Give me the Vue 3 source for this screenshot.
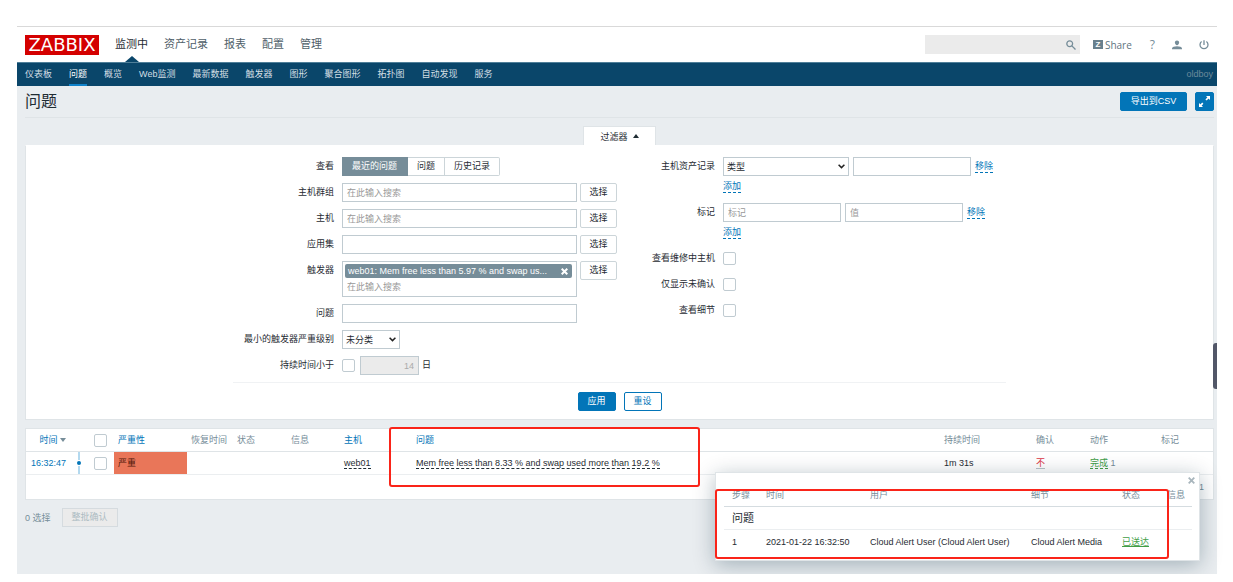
<script setup>
import { ref } from 'vue'

const mainMenu = ['监测中', '资产记录', '报表', '配置', '管理']
const subMenu = ['仪表板', '问题', '概览', 'Web监测', '最新数据', '触发器', '图形', '聚合图形', '拓扑图', '自动发现', '服务']
const views = ['最近的问题', '问题', '历史记录']
const view = ref('最近的问题')
const flags = ['查看维修中主机', '仅显示未确认', '查看细节']
</script>

<template>
  <div class="page">
    <header class="top">
      <a class="logo" href="#">ZABBIX</a>
      <nav class="main-nav">
        <a v-for="(m, i) in mainMenu" :key="m" href="#" :class="{ active: i === 0 }">{{ m }}</a>
      </nav>
      <div class="tools">
        <form class="search" @submit.prevent>
          <input type="text" aria-label="搜索" />
          <button type="submit" aria-label="搜索">
            <svg width="10" height="10" viewBox="0 0 10 10" fill="none" stroke="#768d99" stroke-width="1.300">
              <circle cx="3.700" cy="3.700" r="2.900" /><path d="M5.900 5.900 9.500 9.500" />
            </svg>
          </button>
        </form>
        <a class="share" href="#"><span class="z">Z</span>Share</a>
        <a class="help" href="#">?</a>
        <a class="icon" href="#" aria-label="用户">
          <svg width="10" height="10" viewBox="0 0 10 10" fill="#768d99">
            <path d="M5 0.4c1.3 0 2.1.9 2.1 2.2S6.200 5.200 5 5.200 2.900 3.900 2.900 2.600 3.700.4 5 .4z" />
            <path d="M0 9.300V8.200C0 6.900 2.600 6.200 5 6.200s5 .7 5 2v1.100z" />
          </svg>
        </a>
        <a class="icon" href="#" aria-label="退出">
          <svg width="10" height="10" viewBox="0 0 10 10" fill="none" stroke="#768d99" stroke-width="1.300">
            <path d="M5 .3v4.600M2.600 1.500A4 4 0 1 0 7.400 1.500" />
          </svg>
        </a>
      </div>
    </header>

    <nav class="sub-nav">
      <a v-for="(m, i) in subMenu" :key="m" href="#" :class="{ active: i === 1 }">{{ m }}</a>
      <span class="user">oldboy</span>
    </nav>

    <main>
      <div class="title-bar">
        <h1>问题</h1>
        <button class="btn primary csv" type="button">导出到CSV</button>
        <button class="btn primary full" type="button" aria-label="全屏">
          <svg width="13" height="13" viewBox="0 0 13 13" fill="#fff" stroke="#fff">
            <path d="M8 1h4v4z" stroke="none" /><path d="M1 8v4h4z" stroke="none" />
            <path d="M10.800 2.200 8 5M2.200 10.800 4.800 8.200" stroke-width="1.700" />
          </svg>
        </button>
      </div>

      <div class="tab-row">
        <button class="tab" type="button">过滤器
          <svg width="6" height="4" viewBox="0 0 6 4"><path d="M0 4 3 0l3 4z" fill="#1f2c33" /></svg>
        </button>
      </div>

      <form class="filter" @submit.prevent>
        <div class="cols">
          <div class="col">
            <div class="row">
              <span class="label">查看</span>
              <div class="seg">
                <label v-for="v in views" :key="v" :class="{ on: view === v }">
                  <input v-model="view" type="radio" name="view" :value="v" />{{ v }}
                </label>
              </div>
            </div>
            <div class="row">
              <label class="label" for="groups">主机群组</label>
              <input id="groups" class="field wide" type="text" placeholder="在此输入搜索" />
              <button class="btn pick" type="button">选择</button>
            </div>
            <div class="row">
              <label class="label" for="hosts">主机</label>
              <input id="hosts" class="field wide" type="text" placeholder="在此输入搜索" />
              <button class="btn pick" type="button">选择</button>
            </div>
            <div class="row">
              <label class="label" for="app">应用集</label>
              <input id="app" class="field wide" type="text" />
              <button class="btn pick" type="button">选择</button>
            </div>
            <div class="row">
              <label class="label" for="triggers">触发器</label>
              <div class="multi">
                <div class="chip">
                  <span>web01: Mem free less than 5.97 % and swap us...</span>
                  <button type="button" aria-label="移除">
                    <svg width="7" height="7" viewBox="0 0 7 7" stroke="#fff" stroke-width="2"><path d="m.7.7 5.600 5.600M6.300.7.7 6.300" /></svg>
                  </button>
                </div>
                <input id="triggers" type="text" placeholder="在此输入搜索" />
              </div>
              <button class="btn pick" type="button">选择</button>
            </div>
            <div class="row">
              <label class="label" for="problem">问题</label>
              <input id="problem" class="field wide" type="text" />
            </div>
            <div class="row">
              <label class="label" for="severity">最小的触发器严重级别</label>
              <span class="select short">
                <select id="severity"><option>未分类</option></select>
                <svg width="7" height="5" viewBox="0 0 7 5" fill="none" stroke="#222" stroke-width="1.500"><path d="m.6.7 2.900 2.900L6.400.7" /></svg>
              </span>
            </div>
            <div class="row">
              <label class="label" for="age">持续时间小于</label>
              <input id="age" class="check" type="checkbox" />
              <input class="field days" type="text" value="14" disabled aria-label="天数" />
              <span class="unit">日</span>
            </div>
          </div>

          <div class="col right">
            <div class="row">
              <label class="label" for="inv">主机资产记录</label>
              <div class="stack">
                <div class="line">
                  <span class="select long">
                    <select id="inv"><option>类型</option></select>
                    <svg width="7" height="5" viewBox="0 0 7 5" fill="none" stroke="#222" stroke-width="1.500"><path d="m.6.7 2.900 2.900L6.400.7" /></svg>
                  </span>
                  <input class="field half" type="text" aria-label="资产值" />
                  <a class="link" href="#">移除</a>
                </div>
                <div class="add"><a class="link" href="#">添加</a></div>
              </div>
            </div>
            <div class="row">
              <label class="label" for="tag">标记</label>
              <div class="stack">
                <div class="line">
                  <input id="tag" class="field half" type="text" placeholder="标记" />
                  <input class="field half" type="text" placeholder="值" aria-label="值" />
                  <a class="link" href="#">移除</a>
                </div>
                <div class="add"><a class="link" href="#">添加</a></div>
              </div>
            </div>
            <div v-for="(f, i) in flags" :key="f" class="row">
              <label class="label" :for="'flag' + i">{{ f }}</label>
              <input :id="'flag' + i" class="check" type="checkbox" />
            </div>
          </div>
        </div>
        <div class="actions">
          <button class="btn primary" type="submit">应用</button>
          <button class="btn outline" type="reset">重设</button>
        </div>
      </form>

      <section class="list">
        <table class="problems">
          <colgroup>
            <col class="c-time" /><col class="c-line" /><col class="c-check" /><col class="c-sev" /><col class="c-rec" />
            <col class="c-stat" /><col class="c-info" /><col class="c-host" /><col /><col class="c-dur" />
            <col class="c-ack" /><col class="c-act" /><col class="c-tag" />
          </colgroup>
          <thead>
            <tr>
              <th class="num"><a href="#">时间 <svg width="6" height="4" viewBox="0 0 6 4"><path d="M0 0h6L3 4z" fill="#768d99" /></svg></a></th>
              <th></th>
              <th class="tick"><input class="check" type="checkbox" aria-label="全选" /></th>
              <th><a href="#">严重性</a></th>
              <th>恢复时间</th>
              <th>状态</th>
              <th>信息</th>
              <th><a href="#">主机</a></th>
              <th><a href="#">问题</a></th>
              <th>持续时间</th>
              <th>确认</th>
              <th>动作</th>
              <th>标记</th>
            </tr>
          </thead>
          <tbody>
            <tr>
              <td class="num"><a href="#">16:32:47</a></td>
              <td class="timeline"><i></i></td>
              <td class="tick"><input class="check" type="checkbox" aria-label="选择问题" /></td>
              <td class="sev">严重</td>
              <td></td>
              <td></td>
              <td></td>
              <td><a class="dark" href="#">web01</a></td>
              <td><a class="dark" href="#">Mem free less than 8.33 % and swap used more than 19.2 %</a></td>
              <td>1m 31s</td>
              <td><a class="no" href="#">不</a></td>
              <td class="grey"><a class="ok" href="#">完成</a> 1</td>
              <td></td>
            </tr>
          </tbody>
        </table>
        <div class="total">1</div>

        <div class="popup">
          <button class="close" type="button" aria-label="关闭">
            <svg width="7" height="7" viewBox="0 0 7 7" stroke="#a9b6bd" stroke-width="1.800"><path d="m.7.7 5.600 5.600M6.300.7.7 6.300" /></svg>
          </button>
          <table>
            <colgroup>
              <col class="p-step" /><col class="p-time" /><col class="p-user" /><col class="p-detail" /><col class="p-stat" /><col />
            </colgroup>
            <thead>
              <tr><th>步骤</th><th>时间</th><th>用户</th><th>细节</th><th>状态</th><th>信息</th></tr>
            </thead>
            <tbody>
              <tr><td class="group" colspan="6">问题</td></tr>
              <tr class="last">
                <td>1</td><td>2021-01-22 16:32:50</td><td>Cloud Alert User (Cloud Alert User)</td>
                <td>Cloud Alert Media</td><td class="sent">已送达</td><td></td>
              </tr>
            </tbody>
          </table>
          <div class="mark mark-popup"></div>
        </div>
        <div class="mark mark-problem"></div>
      </section>

      <div class="bulk">
        <span>0 选择</span>
        <button class="btn" type="button" disabled>整批确认</button>
      </div>
    </main>
    <div class="side-handle"></div>
  </div>
</template>

<style>
body {
  background: #fff;
}
</style>

<style scoped>
* {
  box-sizing: border-box;
}
.page {
  position: relative;
  margin: 26px 16px 0 17px;
  border-top: 1px solid #d9d9d9;
  background: #e9edf0;
  color: #1f2c33;
  font-family: "Liberation Sans", "Noto Sans CJK SC", sans-serif;
  font-size: 9px;
  line-height: 14px;
}
a {
  color: #0275b8;
  text-decoration: none;
}
input, button, select {
  margin: 0;
  font-family: inherit;
  font-size: inherit;
  color: inherit;
}
button {
  padding: 0;
  border: 0;
  background: none;
}
svg {
  display: block;
}

.top {
  display: flex;
  align-items: center;
  height: 35px;
  padding: 0 8px;
  background: #fff;
}
.logo {
  width: 74px;
  height: 20px;
  background: #d40000;
  color: #fff;
  font: 18px/20px "DejaVu Sans", sans-serif;
  text-align: center;
}
.main-nav {
  display: flex;
  gap: 16px;
  align-self: stretch;
  margin-left: 16px;
}
.main-nav a {
  position: relative;
  color: #4f6069;
  font-size: 11px;
  line-height: 35px;
}
.main-nav .active {
  color: #1f2c33;
}
.main-nav .active::after {
  content: "";
  position: absolute;
  left: 50%;
  bottom: 0;
  margin-left: -7px;
  border: 7px solid transparent;
  border-top: 0;
  border-bottom: 6px solid #0a466a;
}
.tools {
  display: flex;
  align-items: center;
  margin-left: auto;
}
.tools a {
  color: #768d99;
}
.search {
  display: flex;
  align-items: center;
  width: 155px;
  height: 19px;
  padding-right: 4px;
  background: #ebebeb;
}
.search input {
  flex: 1;
  min-width: 0;
  border: 0;
  background: none;
}
.tools .share {
  display: flex;
  align-items: center;
  gap: 2px;
  margin-left: 13px;
  color: #5f7480;
  font: 10px/14px "Open Sans", sans-serif;
}
.z {
  width: 10px;
  height: 9px;
  background: #69808d;
  color: #fff;
  font: bold 8px/9px "Liberation Sans", sans-serif;
  text-align: center;
}
.help {
  margin-left: 18px;
  font: 12px/14px "Open Sans", sans-serif;
}
.icon {
  margin-left: 17px;
}

.sub-nav {
  display: flex;
  gap: 17px;
  height: 24px;
  padding: 0 4px 0 8px;
  border-top: 1px solid #4f7f99;
  background: #0a466a;
  line-height: 22px;
}
.sub-nav a {
  height: 23px;
  color: #d3dee4;
}
.sub-nav .active {
  border-bottom: 2px solid #0f83cc;
  color: #fff;
}
.user {
  margin-left: auto;
  color: #6c8a9b;
}

main {
  padding: 0 3px 47px 8px;
}
.title-bar {
  display: flex;
  align-items: center;
  gap: 8px;
  height: 32px;
  border-bottom: 1px solid #dfe4e7;
}
h1 {
  flex: 1;
  margin: 0;
  font-size: 16px;
  font-weight: 400;
  line-height: 20px;
}
.btn {
  height: 19px;
  border: 1px solid #ccd5d9;
  border-radius: 2px;
  background: #fff;
  line-height: 17px;
}
.primary {
  border-color: #0275b8;
  background: #0275b8;
  color: #fff;
}
.outline {
  border-color: #0275b8;
  color: #0275b8;
}
.csv {
  width: 67px;
}
.full {
  display: grid;
  place-items: center;
  width: 19px;
}

.tab-row {
  display: flex;
  justify-content: center;
  padding-top: 8px;
}
.tab {
  display: flex;
  align-items: center;
  justify-content: center;
  gap: 5px;
  width: 73px;
  height: 19px;
  border: 1px solid #dfe4e7;
  border-bottom: 0;
  background: #fff;
}
.filter {
  padding: 11px 0 8px;
  border: 1px solid #dfe4e7;
  border-top-color: #fff;
  background: #fff;
}
.cols {
  display: grid;
  grid-template-columns: 385px 388px;
  justify-content: center;
}
.col {
  display: flex;
  flex-direction: column;
  gap: 7px;
}
.row {
  display: flex;
  align-items: flex-start;
}
.label {
  width: 101px;
  margin-right: 8px;
  line-height: 19px;
  text-align: right;
  white-space: nowrap;
}
.right .label {
  width: 97px;
}
.seg {
  display: flex;
}
.seg label {
  height: 19px;
  padding: 0 9px;
  border: 1px solid #ccd5d9;
  border-left-width: 0;
  line-height: 17px;
}
.seg label:last-child {
  border-radius: 0 2px 2px 0;
}
.seg .on {
  padding: 0 10px;
  border-color: #768d99;
  background: #768d99;
  color: #fff;
}
.seg input {
  position: absolute;
  opacity: 0;
  pointer-events: none;
}
.field {
  height: 19px;
  padding: 0 4px;
  border: 1px solid #c0cbd1;
  background: #fff;
}
.wide, .multi {
  width: 235px;
}
::placeholder {
  color: #999;
  opacity: 1;
}
.pick {
  width: 37px;
  margin-left: 3px;
}
.multi {
  height: 36px;
  padding: 2px;
  border: 1px solid #c0cbd1;
}
.chip {
  display: flex;
  align-items: center;
  justify-content: space-between;
  width: 227px;
  height: 14px;
  padding: 0 4px 0 3px;
  border-radius: 2px;
  background: #768d99;
  color: #fff;
  white-space: nowrap;
}
.multi input {
  display: block;
  width: 100%;
  height: 17px;
  padding: 0 2px;
  border: 0;
}
.select {
  position: relative;
  display: block;
  height: 19px;
}
.select select {
  width: 100%;
  height: 19px;
  padding: 0 3px;
  border: 1px solid #c0cbd1;
  border-radius: 0;
  background: #fff;
  appearance: none;
}
.select svg {
  position: absolute;
  top: 7px;
  right: 4px;
  pointer-events: none;
}
.short {
  width: 58px;
}
.long {
  width: 126px;
}
.check {
  width: 13px;
  height: 13px;
  border: 1px solid #c0cbd1;
  border-radius: 2px;
  background: #fff;
  appearance: none;
}
.row .check {
  margin-top: 3px;
}
.days {
  width: 59px;
  margin-left: 5px;
  background: #ebebeb;
  color: #aaa;
  text-align: right;
}
.unit {
  margin-left: 3px;
  line-height: 19px;
}
.line {
  display: flex;
  align-items: center;
  gap: 4px;
}
.half {
  width: 118px;
}
.add {
  display: flex;
  align-items: center;
  height: 20px;
}
.link {
  border-bottom: 1px dashed #0275b8;
  line-height: 12px;
}
.actions {
  display: flex;
  justify-content: center;
  gap: 8px;
  width: 773px;
  margin: 7px auto 0;
  padding-top: 9px;
  border-top: 1px solid #f0f2f4;
}
.actions .btn {
  width: 38px;
}

.list {
  position: relative;
  margin-top: 8px;
  border: 1px solid #dfe4e7;
  background: #fff;
}
table {
  width: 100%;
  border-collapse: separate;
  border-spacing: 0;
  table-layout: fixed;
}
th, td {
  padding: 0 0 0 4px;
  font-weight: 400;
  text-align: left;
  white-space: nowrap;
}
th {
  color: #768d99;
}
.problems th {
  height: 23px;
  border-bottom: 1px solid #dfe4e7;
}
.problems td {
  height: 23px;
  border-bottom: 1px solid #ebeef0;
}
.c-time { width: 46px; }
.c-line { width: 15px; }
.c-check { width: 27px; }
.c-sev { width: 73px; }
.c-rec { width: 46px; }
.c-stat { width: 54px; }
.c-info { width: 53px; }
.c-host { width: 72px; }
.c-dur { width: 92px; }
.c-ack { width: 54px; }
.c-act { width: 71px; }
.c-tag { width: 56px; }
.problems .num {
  padding-right: 6px;
  text-align: right;
}
.num svg {
  display: inline-block;
  vertical-align: 1px;
}
.problems .tick {
  padding: 0 0 0 7px;
}
.tick .check {
  display: block;
}
.problems .timeline {
  padding: 0 0 0 5px;
}
.timeline i {
  display: grid;
  place-items: center;
  width: 4px;
  height: 22px;
  background: linear-gradient(#b3d9ef 8px, transparent 8px, transparent 14px, #b3d9ef 14px) center / 2px 100% no-repeat;
}
.timeline i::before {
  content: "";
  width: 4px;
  height: 4px;
  border-radius: 50%;
  background: #0275b8;
}
.sev {
  background: #e97659;
  color: #52190b;
}
.dark {
  border-bottom: 1px dashed #1f2c33;
  color: #1f2c33;
}
.no {
  border-bottom: 1px solid #b9c3c8;
  color: #dc3545;
}
.ok {
  border-bottom: 1px dashed #429e47;
  color: #429e47;
}
.grey, .total {
  color: #768d99;
}
.total {
  height: 24px;
  padding: 0 9px;
  line-height: 24px;
  text-align: right;
}

.popup {
  position: absolute;
  top: 43px;
  right: 13px;
  width: 485px;
  padding: 11px 7px 7px 8px;
  border: 1px solid #dfe4e7;
  background: #fff;
  box-shadow: 0 4px 20px rgba(0, 40, 60, 0.3);
}
.close {
  position: absolute;
  top: 4px;
  right: 4px;
}
.popup th, .popup td {
  height: 23px;
  padding-left: 8px;
  border-bottom: 1px solid #ebeef0;
}
.popup th {
  border-bottom-color: #d5dce0;
}
.popup .last td {
  border-bottom: 0;
}
.popup .group {
  font-size: 11px;
}
.p-step { width: 34px; }
.p-time { width: 104px; }
.p-user { width: 161px; }
.p-detail { width: 91px; }
.p-stat { width: 45px; }
.popup .sent {
  color: #429e47;
  text-decoration: underline;
}
.mark {
  position: absolute;
  border: 2px solid #fa2419;
  border-radius: 3px;
  pointer-events: none;
}
.mark-problem {
  top: -2px;
  left: 363px;
  width: 311px;
  height: 60px;
}
.mark-popup {
  top: 16px;
  left: -1px;
  width: 454px;
  height: 70px;
}

.bulk {
  display: flex;
  align-items: center;
  gap: 11px;
  margin-top: 8px;
  color: #768d99;
}
.bulk .btn {
  width: 56px;
  border-color: #d5dbdf;
  border-radius: 0;
  background: #ebebeb;
  color: #acbbc2;
}
.side-handle {
  position: absolute;
  top: 316px;
  right: 0;
  width: 4px;
  height: 46px;
  border-radius: 3px 0 0 3px;
  background: #525768;
}
</style>
